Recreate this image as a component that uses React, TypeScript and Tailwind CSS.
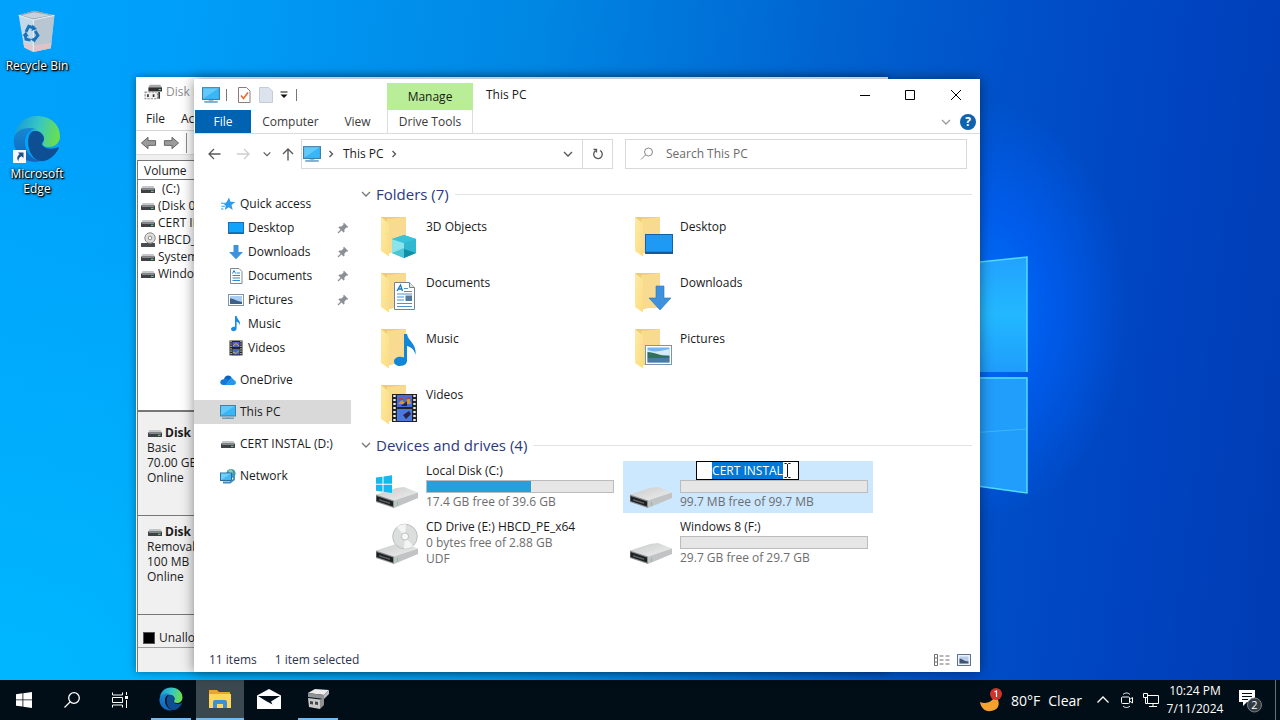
import { useEffect, useRef, type ReactNode } from 'react';

type IconProps = { className?: string };

function Monitor({ className = 'w-4 h-4' }: IconProps) {
  return (
    <svg viewBox="0 0 16 16" className={className} aria-hidden="true">
      <rect x="0.5" y="1.5" width="15" height="10.5" fill="#38b6f5" stroke="#3f7fa8" />
      <path d="M1 2h14L1 11z" fill="#7fd6ff" opacity=".6" />
      <path d="M6 12.5h4v1H6z" fill="#9db4c2" />
      <path d="M2 14.2h12" stroke="#4d8fb5" strokeWidth="1.2" />
    </svg>
  );
}

function SmallDrive({ className = 'w-4 h-4' }: IconProps) {
  return (
    <svg viewBox="0 0 16 16" className={className} aria-hidden="true">
      <path d="M2.5 5h11l1.500 3H1z" fill="#c3c7c9" />
      <rect x="1" y="7.500" width="14" height="4.500" rx=".5" fill="#3f4245" />
      <path d="M2 8.500h12" stroke="#85898c" />
      <path d="M11 10.300h2.500" stroke="#7fd6a0" strokeWidth="1" />
    </svg>
  );
}

function SmallDisc({ className = 'w-4 h-4' }: IconProps) {
  return (
    <svg viewBox="0 0 16 16" className={className} aria-hidden="true">
      <rect x="1" y="11" width="14" height="4" rx=".5" fill="#4a4d50" />
      <circle cx="10" cy="6" r="5.2" fill="#dedede" stroke="#8b8b8b" />
      <circle cx="10" cy="6" r="1.8" fill="#fff" stroke="#8b8b8b" />
    </svg>
  );
}

function DiskTools({ className = 'w-4 h-4' }: IconProps) {
  return (
    <svg viewBox="0 0 16 16" className={className} aria-hidden="true">
      <path d="M5 1.500h9.500L16 4v3H4V4z" fill="#a9a9a9" />
      <path d="M4 4h12v3.500H4z" fill="#2f2f2f" />
      <path d="M13 5.800h2" stroke="#6fd08f" />
      <path d="M1 8h11v6H1z" fill="#f2f2f2" stroke="#8a8a8a" strokeDasharray="2 1" />
      <path d="M3.500 10v2.500M8.500 10v2.500M13.500 8v6" stroke="#333" strokeWidth="1.500" />
    </svg>
  );
}

function Star() {
  return (
    <svg viewBox="0 0 16 16" className="w-4 h-4" aria-hidden="true">
      <path d="M9 1.5l1.5 4.2 4.8.2-3.8 3 1.2 5-4-2.6-3.9 2.6.9-4.1L4 8.2 6.800 5.800z" fill="#2b9df0" />
      <path d="M1 7.2h4M1.500 10.300h3.200M1 13h2.500" stroke="#2b9df0" strokeWidth="1.1" />
    </svg>
  );
}

function DesktopIcon() {
  return (
    <svg viewBox="0 0 16 16" className="w-4 h-4" aria-hidden="true">
      <rect x=".5" y="2.500" width="15" height="11" fill="#12a4fb" stroke="#1271b8" />
      <path d="M1 12.8h14" stroke="#0f5e9c" />
    </svg>
  );
}

function DownIcon() {
  return (
    <svg viewBox="0 0 16 16" className="w-4 h-4" aria-hidden="true">
      <path d="M5.500 1h5v7H15l-7 7.200L1 8h4.500z" fill="#3b93dd" />
    </svg>
  );
}

function DocIcon() {
  return (
    <svg viewBox="0 0 16 16" className="w-4 h-4" aria-hidden="true">
      <path d="M2.500.5h8.500l3 3v12H2.500z" fill="#fff" stroke="#7c8a98" />
      <path d="M4.500 7.500h7.500M4.500 10h7.500M4.500 12.500h7.500M8.500 5h3.500" stroke="#3588c9" />
      <path d="M4.500 5.500l1.500-3 1.500 3" stroke="#2384d3" fill="none" />
    </svg>
  );
}

function PicIcon() {
  return (
    <svg viewBox="0 0 16 16" className="w-4 h-4" aria-hidden="true">
      <rect x=".5" y="2.500" width="15" height="11" fill="#fff" stroke="#8494aa" />
      <rect x="2" y="4" width="12" height="8" fill="#a9cdf3" />
      <path d="M2 6.500c4 0 6 2.500 12 3.500v2H2z" fill="#3f5f86" />
    </svg>
  );
}

function MusicIcon() {
  return (
    <svg viewBox="0 0 16 16" className="w-4 h-4" aria-hidden="true">
      <path d="M7 0h1.600c.5 3.500 4.400 4.500 3.400 9.500-.4-2.300-1.600-3.300-3.400-3.800V12.500c0 3.300-5.600 3.500-5.600.6 0-1.900 2.200-2.900 4-2.300z" fill="#1b8be0" />
    </svg>
  );
}

function FilmIcon() {
  return (
    <svg viewBox="0 0 16 16" className="w-4 h-4" aria-hidden="true">
      <rect x="1.500" y=".5" width="13" height="15" fill="#242424" />
      <path d="M3 1v15M13 1v15" stroke="#e4e4e4" strokeWidth="1.200" strokeDasharray="1.200 1.200" />
      <rect x="4.500" y="2" width="7" height="5" fill="#4c63c8" />
      <rect x="4.500" y="9" width="7" height="5.500" fill="#4c63c8" />
      <path d="M5 6l3-2.500L11 6M5 12l3 1.500 3-3" stroke="#d8b73c" fill="none" />
    </svg>
  );
}

function CloudIcon() {
  return (
    <svg viewBox="0 0 16 16" className="w-4 h-4" aria-hidden="true">
      <path d="M4 7.200C4.500 3 10.300 2 11.800 6L9 11z" fill="#0a63c0" />
      <path d="M3.500 13C-1 13-.7 7.300 3.600 7.200c2-1.400 4.600-.7 5.700 1.500L12 13z" fill="#1578d4" />
      <path d="M5 13l4.500-5.800c2-2 4-.9 4.300.8 3 .7 2.700 5-.3 5z" fill="#2398ea" />
    </svg>
  );
}

function NetworkIcon() {
  return (
    <svg viewBox="0 0 16 16" className="w-4 h-4" aria-hidden="true">
      <circle cx="11" cy="5.500" r="4.600" fill="#3f9bb5" />
      <path d="M8 3l3-2 2 3-2 3z" fill="#8fd0a2" />
      <rect x=".5" y="5" width="11" height="7.500" fill="#43b9f4" stroke="#28719f" />
      <path d="M1 5.500h10L1 12z" fill="#92dcff" opacity=".6" />
      <path d="M3 14.500h7l4-3V8" stroke="#3d8cc0" strokeWidth="1.800" fill="none" />
    </svg>
  );
}

function Pin() {
  return (
    <svg viewBox="0 0 12 12" className="w-3 h-3" aria-hidden="true">
      <path d="M7 .8L11.200 5l-1 .8-.8-.3-2 2 .1 2.300-.9.800L1.400 5.400l.8-.9 2.300.1 2-2-.3-.8z" fill="#8b9096" />
      <path d="M4.500 7.500L1 11" stroke="#8b9096" strokeWidth="1.200" />
    </svg>
  );
}

function Chevron({ className = 'w-3 h-3', dir = 'down' }: IconProps & { dir?: 'down' | 'right' | 'up' }) {
  const d = { down: 'M2 4l4 4 4-4', right: 'M4.500 3L7.500 6l-3 3', up: 'M.5 8.500L6 3l5.500 5.500' }[dir];
  return (
    <svg viewBox="0 0 12 12" className={className} fill="none" stroke="currentColor" strokeWidth="1.300" aria-hidden="true">
      <path d={d} />
    </svg>
  );
}

function FolderTileIcon({ children }: { children: ReactNode }) {
  return (
    <svg viewBox="0 0 40 44" className="w-10 h-11 shrink-0" aria-hidden="true">
      <defs>
        <linearGradient id="folderFront" x1="0" y1="0" x2="1" y2="1">
          <stop offset="0" stopColor="#fdeaa8" />
          <stop offset="1" stopColor="#fcdc80" />
        </linearGradient>
      </defs>
      <path d="M2 2h25v33l-17 3-8-4z" fill="#edcb78" />
      <path d="M8 4L27 2v35H8z" fill="#f8db90" />
      <path d="M2 2l8 6.500V41.500L2 36z" fill="url(#folderFront)" />
      {children}
    </svg>
  );
}

const folderArt: Record<string, ReactNode> = {
  '3D Objects': (
    <>
      <path d="M13 24l12-4 12 4v14l-12 5-12-5z" fill="#31b8d0" />
      <path d="M13 24l12 4v15l-12-5z" fill="#8be4ea" />
      <path d="M13 24l12-4 12 4-12 4z" fill="#38c3d8" />
      <path d="M25 43V34l12 4z" fill="#128fa7" />
      <path d="M13 38l12-5v10z" fill="#4ec5d4" />
    </>
  ),
  Desktop: (
    <>
      <rect x="12.500" y="19.500" width="27" height="19" fill="#1e9af5" stroke="#1462a5" />
      <path d="M13 37.500h27" stroke="#0e5798" strokeWidth="1.500" />
    </>
  ),
  Documents: (
    <>
      <path d="M15.500 11.500h15l5 5v22h-20z" fill="#fff" stroke="#758391" />
      <path d="M30.500 11.500v5h5" fill="#dfe6ec" stroke="#758391" />
      <path d="M18 20l3.500-6 2 6M19 18h4" stroke="#1679c5" strokeWidth="1.300" fill="none" />
      <path d="M25 17.500h4M25 20.500h8M18 23h15M18 26h7M18 29h7M18 32.500h15M18 35.500h15" stroke="#4a94cf" />
      <rect x="26.500" y="24.500" width="6.500" height="5.500" fill="#527ca2" />
    </>
  ),
  Downloads: <path d="M23 15h8v12h7L27 39 16 27h7z" fill="#3e91dc" stroke="#2a75ba" strokeWidth=".6" />,
  Music: (
    <path d="M25 7h3c1 7 10 10 8.500 21-1-5-4-8-8.500-9v15c0 6-13 7-13 .5 0-4 5.500-6 10-4z" fill="#1187d8" />
  ),
  Pictures: (
    <>
      <rect x="12.500" y="18.500" width="26" height="19" fill="#fff" stroke="#7f94aa" />
      <rect x="14.500" y="20.500" width="22" height="15" fill="#78b4ee" />
      <path d="M14.500 23c5 2 10 2 22-1v6h-22z" fill="#d6e9f8" />
      <path d="M14.500 25c7 0 12 4 22 4v2h-22z" fill="#32705e" />
      <path d="M14.500 31h22v4.500h-22z" fill="#4a7ba5" />
    </>
  ),
  Videos: (
    <>
      <rect x="13" y="11" width="25" height="28" fill="#242424" />
      <path d="M15.500 12v27M35.500 12v27" stroke="#efefef" strokeWidth="2.400" strokeDasharray="2 2" />
      <rect x="18" y="12" width="15" height="12" fill="#4a6cd0" />
      <rect x="18" y="26" width="15" height="12" fill="#4a78dc" />
      <path d="M19 21l4-4 3 3 4-6 2 7z" fill="#d49b2a" />
      <path d="M22 23l6-5v5zM24 32l6-4 2 3-5 5z" fill="#2a2440" />
      <path d="M20 16h4M28 15h3" stroke="#c83737" strokeWidth="2" />
    </>
  ),
};

function BigDrive({ kind }: { kind: string }) {
  return (
    <svg viewBox="0 0 44 44" className="w-11 h-11 shrink-0" aria-hidden="true">
      <defs>
        <linearGradient id="driveTop" x1="0" y1="0" x2="1" y2="1">
          <stop offset="0" stopColor="#c9cacb" />
          <stop offset="1" stopColor="#efefef" />
        </linearGradient>
      </defs>
      <path d="M1 27.500L21 21l8-1 14 5.500-24 8z" fill="url(#driveTop)" />
      <path d="M19 33.500l24-8v5.500L19 41z" fill="#c2c3c4" />
      <path d="M1 27.500l18 6V41L1 35z" fill="#8b8d8f" />
      <path d="M1.500 29l16.500 5.500v5L1.500 34z" fill="#1e2022" />
      <path d="M4 32l11 3.600v1.400L4 33.500z" fill="#5c6166" />
      <path d="M22.500 35v3.500" stroke="#63c889" strokeWidth=".8" />
      {kind === 'cd' && (
        <>
          <circle cx="30" cy="13.500" r="12.300" fill="#dcdddd" stroke="#bcbebf" />
          <path d="M30 13.500L22 4a12.300 12.300 0 0 1 9-2.700zM30 13.500l8 9.500a12.300 12.300 0 0 1-9 2.700z" fill="#f4f4f4" />
          <circle cx="30" cy="13.500" r="3.600" fill="#f8f8f8" stroke="#bdbdbd" />
        </>
      )}
      {kind === 'system' && (
        <path d="M1 10.500l6.500-.8v7H1zM8.500 9.500L17 8.300v8.400H8.500zM1 17.700h6.500v7L1 23.800zM8.500 17.700H17V26l-8.500-1.200z" fill="#13b9ef" />
      )}
    </svg>
  );
}

function EdgeLogo({ className = 'w-12 h-12', id }: IconProps & { id: string }) {
  return (
    <svg viewBox="0 0 48 48" className={className} aria-hidden="true">
      <defs>
        <linearGradient id={id + 'a'} x1="0" y1=".3" x2="1" y2=".5">
          <stop offset="0" stopColor="#199bd8" />
          <stop offset=".5" stopColor="#37c6c4" />
          <stop offset="1" stopColor="#6be04a" />
        </linearGradient>
        <linearGradient id={id + 'b'} x1="0" y1="0" x2="0" y2="1">
          <stop offset="0" stopColor="#1688d2" />
          <stop offset="1" stopColor="#1263b8" />
        </linearGradient>
      </defs>
      <path d="M2 21C3 9 12 1 24 1c14 0 23 9 23 20 0 7-5 11-11 11-5 0-7-2-6-4 3-5 0-11-7-12C12 14 4 17 2 21z" fill={'url(#' + id + 'a)'} />
      <path d="M1 24C2 14 14 11 23 14c-8 1-11 7-11 13 0 9 6 17 15 19-3 1-6 1-9 .5C8 45 0 35 1 24z" fill={'url(#' + id + 'b)'} />
      <path d="M16 21c1-4 5-6 8-5 4 1 7 4 7 8 0 3-4 4-1 7 4 4 12 3 15 1 1 0 1 1 .5 2C41 42 34 47 27 46 18 44 13 31 16 21z" fill="#0e4f94" />
    </svg>
  );
}

function RecycleBin() {
  return (
    <svg viewBox="0 0 48 48" className="w-11 h-11" aria-hidden="true">
      <path d="M4 8l17-5 22 5-4 36-19 4-10-5z" fill="#d6dfe6" opacity=".9" />
      <path d="M4 8l17-5 22 5-23 5z" fill="#8fa1ae" />
      <path d="M7 8l14-3.500L39 8l-19 3.500z" fill="#c4d2dc" />
      <path d="M20 13l23-5-4 36-19 4z" fill="#b4c0ca" opacity=".8" />
      <path d="M9 37l10 4 21-3-1 6-19 4-10-5z" fill="#e7c3c6" opacity=".8" />
      <path d="M4 8l16 5 23-5M20 13v34" stroke="#eef5fa" fill="none" />
      <g fill="none" stroke="#1773bb" strokeWidth="3.200">
        <path d="M12 26l3-6 6 2M22 25l3 5-4 5M17 35l-5-1-1-5" />
      </g>
      <path d="M19 18l5 5-6 2zM22 32v6l-5-4zM8 30l4-4 3 5z" fill="#1773bb" />
    </svg>
  );
}

function WindowsLogo({ className = 'w-4 h-4' }: IconProps) {
  return (
    <svg viewBox="0 0 16 16" className={className} fill="currentColor" aria-hidden="true">
      <path d="M0 2.200L6.500 1.300V7.500H0zM7.300 1.200L16 0v7.500H7.300zM0 8.300h6.500v6.300L0 13.700zM7.300 8.300H16V16l-8.700-1.200z" />
    </svg>
  );
}

const volumes = ['(C:)', '(Disk 0', 'CERT IN', 'HBCD_', 'System', 'Window'];

function DiskPanel({ name, lines }: { name: string; lines: string[] }) {
  return (
    <section className="h-[99px] shrink-0 border-b border-[#777] bg-[#f0f0f0] pt-2 pl-[9px] leading-[15px]">
      <h2 className="flex h-[15px] items-center gap-0.5 font-bold">
        <SmallDrive />
        {name}
      </h2>
      {lines.map((l) => (
        <p key={l}>{l}</p>
      ))}
    </section>
  );
}

function DiskManagement() {
  return (
    <section
      aria-label="Disk Management"
      className="absolute left-[136px] right-[392px] top-[77px] bottom-2 flex flex-col overflow-hidden bg-white text-[12px] whitespace-nowrap text-[#1c1c1c] shadow-[0_0_8px_rgba(0,0,0,0.4)]"
    >
      <header className="flex h-[30px] shrink-0 items-center gap-1 pl-2 text-[#8d8d8d]">
        <DiskTools className="w-[18px] h-[18px]" />
        Disk M
      </header>
      <nav className="flex h-[23px] shrink-0 items-center gap-4 pl-2.5">
        <button>File</button>
        <button>Act</button>
      </nav>
      <div className="flex h-6 shrink-0 items-center gap-1.5 border-t border-[#d5d5d5] pl-1">
        {[false, true].map((flip) => (
          <button key={String(flip)} aria-label={flip ? 'Forward' : 'Back'}>
            <svg viewBox="0 0 18 16" className={flip ? 'w-[17px] h-4 rotate-180' : 'w-[17px] h-4'} aria-hidden="true">
              <path d="M1.500 8l7-6v3.500h8v5h-8V14z" fill="#9b9b9b" stroke="#5f5f5f" />
            </svg>
          </button>
        ))}
        <span className="h-5 border-l border-[#8a8a8a]" />
      </div>
      <div className="h-[6px] shrink-0 border-t border-[#dedede] bg-[#f0f0f0]" />
      <table className="mx-px border-l border-[#777]">
        <thead>
          <tr>
            <th className="h-[19px] border-y border-[#777] pl-1.5 text-left text-[12px] leading-[17px] font-normal">Volume</th>
          </tr>
        </thead>
        <tbody>
          {volumes.map((v, i) => (
            <tr key={v}>
              <td className="p-0">
                <span className={i === 0 ? 'flex h-[17px] items-center gap-1.5 pl-0.5' : 'flex h-[17px] items-center gap-0.5 pl-0.5'}>
                  {i === 3 ? <SmallDisc /> : <SmallDrive />}
                  {v}
                </span>
              </td>
            </tr>
          ))}
        </tbody>
      </table>
      <div className="mx-px flex-1 border-l border-[#777]" />
      <div className="mx-px shrink-0 border-t-2 border-l border-[#777] bg-[#f0f0f0]">
        <div className="h-[5px]" />
        <DiskPanel name="Disk 0" lines={['Basic', '70.00 GB', 'Online']} />
        <DiskPanel name="Disk 1" lines={['Removab', '100 MB', 'Online']} />
        <div className="flex h-[33px] items-end gap-1 border-b border-[#a0a0a0] px-[5px]">
          <span className="mb-[3px] h-3 w-3 border border-[#555] bg-black" />
          Unalloc
        </div>
        <div className="h-6" />
      </div>
    </section>
  );
}

const quick = [
  { name: 'Desktop', icon: <DesktopIcon />, pin: true },
  { name: 'Downloads', icon: <DownIcon />, pin: true },
  { name: 'Documents', icon: <DocIcon />, pin: true },
  { name: 'Pictures', icon: <PicIcon />, pin: true },
  { name: 'Music', icon: <MusicIcon />, pin: false },
  { name: 'Videos', icon: <FilmIcon />, pin: false },
];

const roots = [
  { name: 'OneDrive', icon: <CloudIcon />, active: false },
  { name: 'This PC', icon: <Monitor />, active: true },
  { name: 'CERT INSTAL (D:)', icon: <SmallDrive />, active: false },
  { name: 'Network', icon: <NetworkIcon />, active: false },
];

function Sidebar() {
  return (
    <nav aria-label="Navigation pane" className="flex w-[157px] shrink-0 flex-col gap-2 pt-2.5">
      <div>
        <button className="flex h-6 w-full items-center gap-1 pl-[26px]">
          <Star />
          Quick access
        </button>
        {quick.map((q) => (
          <button key={q.name} className="flex h-6 w-full items-center gap-1 pr-0.5 pl-[34px]">
            {q.icon}
            <span className="flex-1 text-left">{q.name}</span>
            {q.pin && <Pin />}
          </button>
        ))}
      </div>
      {roots.map((r) => (
        <button
          key={r.name}
          className={
            r.active
              ? 'flex h-6 w-full items-center gap-1 bg-[#d9d9d9] pl-[26px]'
              : 'flex h-6 w-full items-center gap-1 pl-[26px]'
          }
        >
          {r.icon}
          {r.name}
        </button>
      ))}
    </nav>
  );
}

function GroupHeader({ children }: { children: ReactNode }) {
  return (
    <h2 className="flex h-6 items-center text-[15px] text-[#2b3a7c]">
      <Chevron className="mr-1 w-3 h-3 text-[#777]" />
      {children}
      <span className="ml-1.5 flex-1 border-t border-[#e3e3e3]" />
    </h2>
  );
}

function UsageBar({ used, label }: { used: number; label: string }) {
  return (
    <div
      role="progressbar"
      aria-label={label}
      aria-valuenow={used}
      className="h-[13px] border border-[#bcbcbc] bg-[#e6e6e6]"
    >
      <div className="h-full bg-[#26a0da]" style={{ width: used + '%' }} />
    </div>
  );
}

function RenameBox() {
  const ref = useRef<HTMLInputElement>(null);
  useEffect(() => {
    ref.current?.focus();
    ref.current?.select();
  }, []);
  return (
    <div className="relative ml-4 h-[19px] w-[103px]">
      <input
        ref={ref}
        aria-label="Drive name"
        defaultValue="CERT INSTAL"
        className="block h-full w-full border border-black bg-white text-center text-[12px] outline-none selection:bg-[#0078d7] selection:text-white"
      />
      <svg viewBox="0 0 7 15" className="absolute top-0.5 right-2 h-[15px] w-[7px]" fill="none" stroke="#111" aria-hidden="true">
        <path d="M.5.5h2l1 1 1-1h2M3.500 1.500v12M.5 14.500h2l1-1 1 1h2" />
      </svg>
    </div>
  );
}

const folders = ['3D Objects', 'Desktop', 'Documents', 'Downloads', 'Music', 'Pictures', 'Videos'];

const drives = [
  { name: 'Local Disk (C:)', kind: 'system', used: 56, info: '17.4 GB free of 39.6 GB' },
  { name: 'CERT INSTAL', kind: 'disk', used: 0, info: '99.7 MB free of 99.7 MB', renaming: true },
  { name: 'CD Drive (E:) HBCD_PE_x64', kind: 'cd', info: '0 bytes free of 2.88 GB', extra: 'UDF' },
  { name: 'Windows 8 (F:)', kind: 'disk', used: 0, info: '29.7 GB free of 29.7 GB' },
];

function Explorer() {
  return (
    <section
      aria-label="This PC"
      className="absolute left-[194px] right-[300px] top-[79px] bottom-2 flex flex-col bg-white text-[12px] whitespace-nowrap text-[#1a1a1a] shadow-[0_0_12px_rgba(0,0,0,0.45)]"
    >
      <header className="flex h-[31px] shrink-0 items-center">
        <div className="flex w-[193px] items-center pl-2">
          <Monitor className="w-[18px] h-[18px]" />
          <span className="ml-1.5 h-3 border-l border-[#777]" />
          <svg viewBox="0 0 14 16" className="ml-2.5 w-3.5 h-4" aria-hidden="true">
            <path d="M1.500.5h8l3.500 3.500v11.500H1.500z" fill="#fff" stroke="#8b7d78" />
            <path d="M4 8.500l2.500 3L11 5.500" fill="none" stroke="#e3713c" strokeWidth="1.700" />
          </svg>
          <svg viewBox="0 0 14 16" className="ml-2 w-3.5 h-4" aria-hidden="true">
            <path d="M.5.5h9l4 3.500v11.500H.5z" fill="#dde3ec" stroke="#c3ccd8" />
          </svg>
          <svg viewBox="0 0 8 8" className="ml-[7px] w-2 h-2" aria-hidden="true">
            <path d="M.5 1h7" stroke="#111" />
            <path d="M.5 3.500h7L4 7z" fill="#111" />
          </svg>
          <span className="ml-2 h-3 border-l border-[#777]" />
        </div>
        <div className="flex h-[27px] w-[86px] items-center justify-center self-end bg-[#b9ed97]">Manage</div>
        <h1 className="ml-[13px] flex-1">This PC</h1>
        <div className="mr-px flex items-center text-black">
          <button aria-label="Minimize" className="flex w-[45px] justify-center">
            <svg viewBox="0 0 10 10" className="w-2.5 h-2.5" aria-hidden="true"><path d="M0 5.500h10" stroke="currentColor" /></svg>
          </button>
          <button aria-label="Maximize" className="flex w-[46px] justify-center">
            <svg viewBox="0 0 10 10" className="w-2.5 h-2.5" aria-hidden="true"><path d="M.5.5h9v9h-9z" fill="none" stroke="currentColor" /></svg>
          </button>
          <button aria-label="Close" className="flex w-[46px] justify-center">
            <svg viewBox="0 0 10 10" className="w-2.5 h-2.5" aria-hidden="true"><path d="M0 0l10 10M10 0L0 10" stroke="currentColor" /></svg>
          </button>
        </div>
      </header>

      <nav aria-label="Ribbon" className="flex h-6 shrink-0 items-stretch border-b border-[#dcdcdc] text-[#3a3a3a]">
        <button className="ml-px w-14 bg-[#0063b1] text-white">File</button>
        <button className="w-[79px]">Computer</button>
        <button className="w-[55px]">View</button>
        <button className="ml-0.5 w-[86px] border-x border-[#dcdcdc]">Drive Tools</button>
        <div className="flex flex-1 items-center justify-end gap-2 pr-1">
          <Chevron className="w-3 h-3 text-[#999]" />
          <button aria-label="Help" className="flex h-4 w-4 items-center justify-center rounded-full bg-[#0f62ae] text-[12px] font-bold text-white">
            ?
          </button>
        </div>
      </nav>

      <div className="flex h-10 shrink-0 items-center pr-[13px] text-[#555]">
        <button aria-label="Back" className="ml-3.5">
          <svg viewBox="0 0 14 14" className="w-3.5 h-3.5" fill="none" stroke="#5a5a5a" strokeWidth="1.300" aria-hidden="true"><path d="M12.500 7H1.500M6 2L1 7l5 5" /></svg>
        </button>
        <button aria-label="Forward" className="ml-3.5">
          <svg viewBox="0 0 14 14" className="w-3.5 h-3.5" fill="none" stroke="#cdcdcd" strokeWidth="1.300" aria-hidden="true"><path d="M1 7h11.500M8 2l5 5-5 5" /></svg>
        </button>
        <button aria-label="Recent locations" className="ml-3"><Chevron className="w-2.5 h-2.5" /></button>
        <button aria-label="Up" className="ml-[9px]">
          <svg viewBox="0 0 14 14" className="w-3.5 h-3.5" fill="none" stroke="#5a5a5a" strokeWidth="1.400" aria-hidden="true"><path d="M7 13.500V2M2 7l5-5 5 5" /></svg>
        </button>
        <div className="ml-1.5 flex h-[30px] flex-1 items-stretch border border-[#d9d9d9]">
          <div className="flex flex-1 items-center gap-1 pl-px text-[#1a1a1a]">
            <Monitor className="w-[18px] h-[18px]" />
            <Chevron dir="right" className="w-3 h-3 text-[#555]" />
            <span className="ml-0.5">This PC</span>
            <Chevron dir="right" className="w-3 h-3 text-[#555]" />
          </div>
          <button aria-label="Previous locations" className="flex w-[29px] items-center justify-center"><Chevron /></button>
          <button aria-label="Refresh" className="flex w-[30px] items-center justify-center border-l border-[#d9d9d9]">
            <svg viewBox="0 0 12 12" className="w-3 h-3" fill="none" stroke="#555" strokeWidth="1.300" aria-hidden="true">
              <path d="M3.500 2.800A4.300 4.300 0 1 0 8 2.500M1.500 1.500h3v3" />
            </svg>
          </button>
        </div>
        <label className="ml-3 flex h-[30px] w-[342px] items-center gap-3 border border-[#d9d9d9] pl-3.5">
          <svg viewBox="0 0 14 14" className="w-3.5 h-3.5" fill="none" stroke="#8a8a8a" aria-hidden="true">
            <circle cx="8.500" cy="5" r="4" /><path d="M5.500 8L1 12.500" />
          </svg>
          <input type="search" aria-label="Search This PC" placeholder="Search This PC" className="min-w-0 flex-1 bg-transparent outline-none placeholder:text-[#6b6b6b]" />
        </label>
      </div>

      <div className="flex min-h-0 flex-1 pt-2">
        <Sidebar />
        <main className="min-w-0 flex-1 pr-2 pl-[9px]">
          <GroupHeader>Folders (7)</GroupHeader>
          <div className="grid grid-cols-[250px_250px] gap-1 pt-[7px] pl-[9px]">
            {folders.map((f) => (
              <button key={f} className="flex h-[52px] items-start gap-[7px] pt-0.5 pl-2.5 text-left">
                <FolderTileIcon>{folderArt[f]}</FolderTileIcon>
                <span className="pt-1 leading-4">{f}</span>
              </button>
            ))}
          </div>
          <GroupHeader>Devices and drives (4)</GroupHeader>
          <div className="grid grid-cols-[250px_250px] gap-1 pt-1 pl-[9px]">
            {drives.map((d) => (
              <div
                key={d.name}
                className={
                  d.renaming
                    ? 'flex h-[52px] items-start gap-[7px] bg-[#cce8ff] pr-[5px] pl-1.5'
                    : 'flex h-[52px] items-start gap-[7px] pr-[5px] pl-1.5'
                }
              >
                <span className="pt-1.5"><BigDrive kind={d.kind} /></span>
                <div className="min-w-0 flex-1">
                  {d.renaming ? <RenameBox /> : <p className="h-[19px] leading-[19px]">{d.name}</p>}
                  {d.used !== undefined && <UsageBar used={d.used} label={d.name} />}
                  <p className={d.extra ? 'h-[14px] leading-[14px] text-[#6d6d6d]' : 'leading-[18px] text-[#6d6d6d]'}>{d.info}</p>
                  {d.extra && <p className="leading-[18px] text-[#6d6d6d]">{d.extra}</p>}
                </div>
              </div>
            ))}
          </div>
        </main>
      </div>

      <footer className="flex h-[25px] shrink-0 items-center gap-[18px] px-[15px] text-[#2b3350]">
        <span>11 items</span>
        <span className="flex-1">1 item selected</span>
        <div className="-mr-1.5 flex items-center gap-[7px]">
          <button aria-label="Details view">
            <svg viewBox="0 0 16 12" className="w-4 h-3" stroke="#6f6f6f" fill="none" aria-hidden="true">
              <path d="M.5.5h3v11h-3zM.5 4h3M.5 8h3M5.500 2h4M5.500 6h4M5.500 10h4M11.500 2h4M11.500 6h4M11.500 10h4" />
            </svg>
          </button>
          <button aria-label="Large icons view">
            <svg viewBox="0 0 14 12" className="w-3.5 h-3" aria-hidden="true">
              <rect x=".5" y=".5" width="13" height="11" fill="#eaf4ff" stroke="#62718a" />
              <rect x="2.500" y="2.500" width="9" height="7" fill="#b7cdea" />
              <path d="M2.500 4.500c3 0 4 3 9 3v2h-9z" fill="#40536f" />
            </svg>
          </button>
        </div>
      </footer>
    </section>
  );
}

function Wallpaper() {
  return (
    <div className="absolute inset-0 bg-[linear-gradient(97deg,#00a2fc_0%,#00a0fa_12%,#0086e3_40%,#0062cf_62%,#004fc8_76%,#0043c0_88%,#003cb2_100%)]">
      <div className="absolute inset-0 bg-[radial-gradient(ellipse_900px_560px_at_0%_100%,rgba(0,186,255,0.9),rgba(0,186,255,0.5)_40%,transparent)]" />
      <div className="absolute inset-0 bg-[radial-gradient(ellipse_150px_210px_at_980px_310px,rgba(0,118,255,0.95),rgba(0,100,255,0.65)_45%,transparent)]" />
      <svg viewBox="0 0 60 260" className="absolute top-[250px] left-[970px] h-[260px] w-[60px]" aria-hidden="true">
        <defs>
          <linearGradient id="pane" x1="0" y1="0" x2="0" y2="1">
            <stop offset="0" stopColor="#22a2ff" />
            <stop offset=".5" stopColor="#22b8ff" />
            <stop offset="1" stopColor="#1f9dfc" />
          </linearGradient>
        </defs>
        <path d="M0 13l57-6v115H0z" fill="url(#pane)" />
        <path d="M0 127h57v116L0 235z" fill="#219dfb" />
        <path d="M0 183l57-4" stroke="#3fb4ff" />
        <path d="M0 13l57-6v115M0 128h57v115L0 235" stroke="#4fdcff" strokeWidth="1.500" fill="none" />
      </svg>
    </div>
  );
}

function Shortcut({ label, children }: { label: string; children: ReactNode }) {
  return (
    <button className="flex w-[74px] flex-col items-center text-[12px] leading-[15px] text-white [text-shadow:1px_1px_1px_#000,1px_1px_2px_#000,0_0_3px_#000]">
      {children}
      <span>{label}</span>
    </button>
  );
}

function Taskbar() {
  return (
    <footer className="flex h-10 shrink-0 items-stretch bg-[#010e17] text-[12px] text-white">
      <button aria-label="Start" className="flex w-12 items-center justify-center"><WindowsLogo /></button>
      <button aria-label="Search" className="flex w-12 items-center justify-center">
        <svg viewBox="0 0 16 16" className="w-4 h-4" fill="none" stroke="#fff" strokeWidth="1.300" aria-hidden="true">
          <circle cx="10" cy="6" r="5.300" /><path d="M6 10L.5 15.500" />
        </svg>
      </button>
      <button aria-label="Task View" className="flex w-12 items-center justify-center">
        <svg viewBox="0 0 16 16" className="w-4 h-4" fill="none" stroke="#fff" aria-hidden="true">
          <path d="M.5.5v2.500h10V.5M.5 15.500V13h10v2.500M.5 5.500h10v5H.5zM14.500 0v3M14.500 8v8" /><path d="M13 4h3v3h-3z" fill="#fff" stroke="none" />
        </svg>
      </button>
      <div className="ml-[3px] flex gap-px">
        <button aria-label="Microsoft Edge" className="flex w-12 flex-col items-center">
          <span className="flex flex-1 items-center"><EdgeLogo id="tb" className="w-6 h-6" /></span>
          <span className="h-0.5 w-10 bg-[#76b9ed]" />
        </button>
        <button aria-label="File Explorer" className="flex w-12 flex-col items-center bg-[#3a484f]">
          <span className="flex flex-1 items-center">
            <svg viewBox="0 0 24 20" className="w-6 h-5" aria-hidden="true">
              <path d="M1 1h8l2 2h11v16H1z" fill="#e5a72f" />
              <path d="M1 5h22v14H1z" fill="#ffd65c" />
              <path d="M5 19v-6a2 2 0 0 1 2-2h10a2 2 0 0 1 2 2v6h-4v-4H9v4z" fill="#3f8fd8" />
            </svg>
          </span>
          <span className="h-0.5 w-full bg-[#76b9ed]" />
        </button>
        <button aria-label="Mail" className="flex w-12 flex-col items-center pt-[9px]">
          <svg viewBox="0 0 24 20" className="w-6 h-5" aria-hidden="true">
            <path d="M0 6.500L12 0l12 6.500V20H0z" fill="#fff" />
            <path d="M1 7h22l-9 5.500 1.500 3L9 12z" fill="#010e17" />
          </svg>
        </button>
        <button aria-label="Disk Management" className="flex w-12 flex-col items-center">
          <span className="flex flex-1 items-center">
            <svg viewBox="0 0 24 22" className="w-6 h-[22px]" aria-hidden="true">
              <path d="M2 5l7-4 14 1-5 5z" fill="#ececec" />
              <path d="M2 5l16 2v4L2 9z" fill="#8d9295" />
              <path d="M18 7l5-5v4l-5 5z" fill="#bdbdbd" />
              <path d="M2 10l12 1.500V21L3 19z" fill="#c9c9c9" />
              <path d="M14 11.500l4-2V17l-4 4z" fill="#909090" />
              <path d="M4 13l3 .5v3L4 16zM9 13.500l3 .5v3l-3-.5z" fill="#43474a" />
            </svg>
          </span>
          <span className="h-0.5 w-10 bg-[#76b9ed]" />
        </button>
      </div>

      <div className="ml-auto flex items-center">
        <button className="flex items-center gap-2 text-[14px]">
          <svg viewBox="0 0 24 24" className="w-6 h-6" aria-hidden="true">
            <path d="M1 14c5 2 12 1 15-6 6 5 5 14-4 15C6 24 2 20 1 14z" fill="#f6a02d" />
            <circle cx="17" cy="6" r="6" fill="#d3302c" />
            <path d="M15.500 4l2-1v6" stroke="#fff" strokeWidth="1.200" fill="none" />
          </svg>
          <span>80°F</span>
          <span>Clear</span>
        </button>
        <button aria-label="Show hidden icons" className="ml-[15px]"><Chevron dir="up" className="w-3 h-3" /></button>
        <button aria-label="Meet Now" className="ml-2.5">
          <svg viewBox="0 0 16 16" className="w-4 h-4" fill="none" stroke="#fff" aria-hidden="true">
            <rect x="2.500" y="5" width="8" height="6.500" rx="1" /><path d="M10.500 7.500l3-2v5.500l-3-2M4 2.500C6 .5 9 .5 11 2.500M4 14c2 2 5 2 7 0" />
          </svg>
        </button>
        <button aria-label="Network" className="ml-2">
          <svg viewBox="0 0 16 16" className="w-4 h-4" fill="none" stroke="#fff" aria-hidden="true">
            <path d="M4.500 3.500h11v8h-11zM6 14.500h8M10 11.500v3M.5 1.500h4v4h-4zM2.500 5.500v6h2" />
          </svg>
        </button>
        <button className="flex w-[72px] flex-col items-center leading-[18px]">
          <span>10:24 PM</span>
          <span>7/11/2024</span>
        </button>
        <button aria-label="Notifications, 2 new" className="ml-2 mr-3">
          <svg viewBox="0 0 24 26" className="w-6 h-[26px]" aria-hidden="true">
            <path d="M0 3h16v12H8l-4 4v-4H0z" fill="#fff" />
            <path d="M3 6.500h10M3 9.500h10M3 12.500h6" stroke="#010e17" />
            <circle cx="15.500" cy="18" r="7" fill="#333b42" stroke="#77808a" />
            <text x="15.500" y="22" textAnchor="middle" fontSize="11" fill="#fff">2</text>
          </svg>
        </button>
        <span className="mr-1 h-10 border-l border-[#68727a]" />
      </div>
    </footer>
  );
}

export default function App() {
  return (
    <div className="flex h-screen flex-col overflow-hidden font-['Open_Sans','Noto_Sans',sans-serif]">
      <div className="relative min-h-0 flex-1">
        <Wallpaper />
        <div className="relative flex w-[74px] flex-col gap-[42px] pt-2">
          <Shortcut label="Recycle Bin"><span className="mb-1.5"><RecycleBin /></span></Shortcut>
          <Shortcut label="Microsoft Edge">
            <span className="relative mb-[3px]">
              <EdgeLogo id="dt" />
              <svg viewBox="0 0 13 13" className="absolute bottom-0 left-0 h-[13px] w-[13px]" aria-hidden="true">
                <path d="M0 0h13v13H0z" fill="#f5f7fa" />
                <path d="M5 2.500h5.500V8L8.500 6.200C6.500 7 5.500 8.500 5.500 11 3.500 9 4 6 6.500 4.300z" fill="#1d4e8c" />
              </svg>
            </span>
          </Shortcut>
        </div>
        <DiskManagement />
        <Explorer />
      </div>
      <Taskbar />
    </div>
  );
}
